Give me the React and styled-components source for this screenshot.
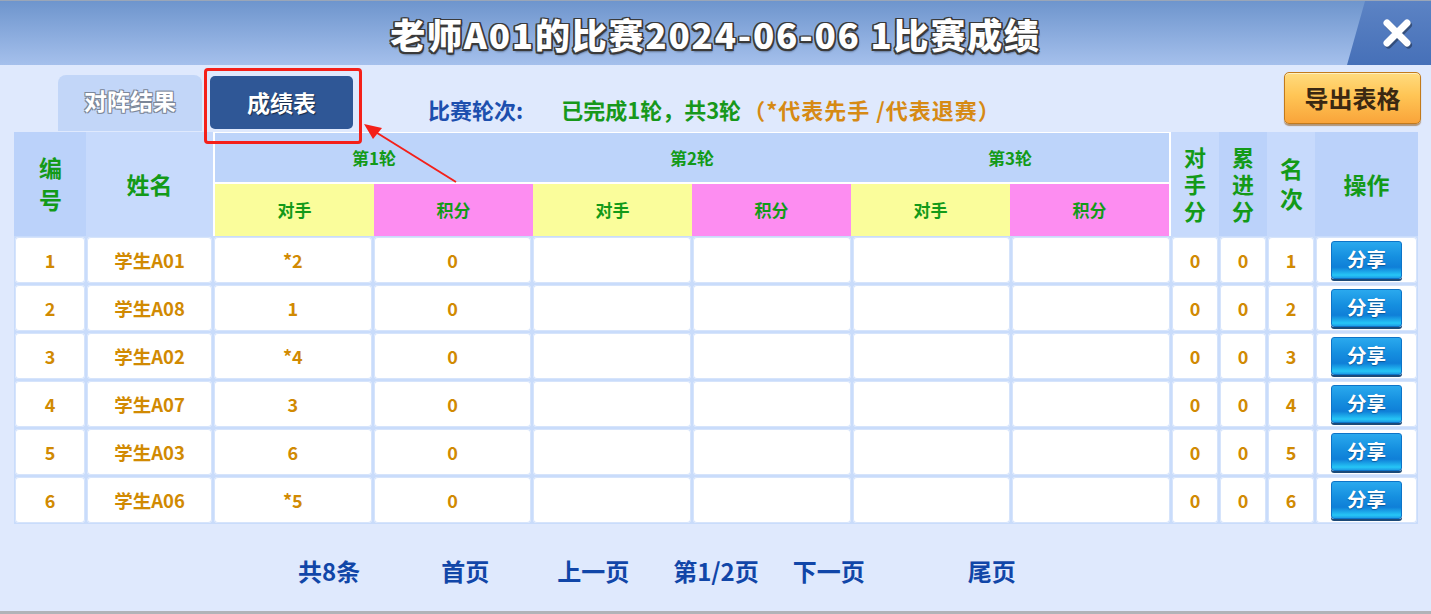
import React from 'react'
import styled, { createGlobalStyle } from 'styled-components'

const GlobalStyle = createGlobalStyle`
  html, body {
    margin: 0;
    padding: 0;
    background: #dfe9fd;
  }
  * { box-sizing: border-box; }
`

const FONT = `"Noto Sans CJK SC", "Noto Sans", sans-serif`
const COLS = '72px 127px repeat(6, 1fr) 48px 48px 48px 103px'

const Page = styled.div`
  position: relative;
  width: 1431px;
  height: 614px;
  overflow: hidden;
  background: #dfe9fd;
  border-top: 1px solid #9aa6b8;
  border-bottom: 3px solid #b0b3b8;
  font-family: ${FONT};
  font-weight: 700;
  display: flex;
  flex-direction: column;
`

const TitleBar = styled.div`
  position: relative;
  height: 64px;
  flex-shrink: 0;
  background: linear-gradient(to bottom, #6e95cd, #a5c0ec);
  display: flex;
  align-items: center;
  justify-content: center;
`

const Title = styled.h1`
  margin: 0;
  padding-top: 1px;
  font-family: ${FONT};
  font-size: 35px;
  font-weight: 900;
  letter-spacing: 1.8px;
  color: #ffffff;
  text-shadow:
    -1.5px -1.5px 0 #3a3a3a, 1.5px -1.5px 0 #3a3a3a,
    -1.5px 1.5px 0 #3a3a3a, 1.5px 1.5px 0 #3a3a3a,
    0 -1.5px 0 #3a3a3a, 0 1.5px 0 #3a3a3a,
    -1.5px 0 0 #3a3a3a, 1.5px 0 0 #3a3a3a,
    1px 3px 2px rgba(0, 0, 0, 0.35);
`

const CloseArea = styled.button`
  position: absolute;
  top: 0;
  right: 0;
  width: 84px;
  height: 64px;
  border: none;
  padding: 0 0 0 16px;
  background: linear-gradient(to bottom, #5c83c4, #4670b8);
  clip-path: polygon(18px 0, 100% 0, 100% 100%, 0 100%);
  display: flex;
  align-items: center;
  justify-content: center;
  cursor: pointer;
`

const TopRow = styled.div`
  position: relative;
  height: 67px;
  flex-shrink: 0;
  display: flex;
  align-items: flex-end;
  padding-left: 58px;
  padding-right: 10px;
`

const Tab = styled.div`
  width: ${p => (p.$active ? '143px' : '144px')};
  height: ${p => (p.$active ? '53px' : '56px')};
  margin-left: ${p => (p.$active ? '8px' : '0')};
  margin-bottom: ${p => (p.$active ? '3px' : '1px')};
  border-radius: ${p => (p.$active ? '5px' : '8px 8px 0 0')};
  background: ${p => (p.$active ? '#2f5796' : '#c2d6f8')};
  color: #ffffff;
  font-size: 23px;
  display: flex;
  align-items: center;
  justify-content: center;
  padding-bottom: ${p => (p.$active ? '2px' : '6px')};
  text-shadow: ${p => (p.$active
    ? '1px 1px 1px rgba(0,0,0,0.5)'
    : '-1px -1px 0 #7c8798, 1px -1px 0 #7c8798, -1px 1px 0 #7c8798, 1px 1px 0 #7c8798')};
`

const Info = styled.div`
  display: flex;
  align-items: center;
  margin-left: 75px;
  margin-bottom: 7px;
  font-size: 22px;
  height: 32px;
`

const InfoLabel = styled.span`
  color: ${p => p.$color};
  margin-left: ${p => p.$gap || 0}px;
  letter-spacing: ${p => p.$ls || 0}px;
`

const ExportButton = styled.button`
  margin-left: auto;
  align-self: flex-start;
  margin-top: 7px;
  width: 137px;
  height: 52px;
  border: 1px solid #c27a1c;
  border-radius: 5px;
  background: linear-gradient(to bottom, #ffdb7e 0%, #ffc555 45%, #f9a43a 100%);
  box-shadow: inset 0 1px 0 #fff1c0, 0 2px 1px rgba(140, 80, 10, 0.55);
  font-family: ${FONT};
  font-weight: 700;
  font-size: 24px;
  color: #3a2812;
  padding: 0 0 2px;
  cursor: pointer;
`

const Highlight = styled.div`
  position: absolute;
  left: 204px;
  top: 3px;
  width: 158px;
  height: 76px;
  border: 3px solid #f42019;
  border-radius: 4px;
  pointer-events: none;
`

const Arrow = styled.svg`
  position: absolute;
  left: 360px;
  top: 118px;
  pointer-events: none;
`

const Table = styled.div`
  margin: 0 13px 0 14px;
`

const HeadGrid = styled.div`
  display: grid;
  grid-template-columns: ${COLS};
  grid-template-rows: 104px;
  height: 104px;
`

const HeadCell = styled.div`
  background: ${p => (p.$dark ? '#bbd2fa' : '#c7dafc')};
  color: #139a18;
  font-size: ${p => p.$size || 23}px;
  display: flex;
  align-items: center;
  justify-content: center;
  text-align: center;
`

// 세로 글자 (编号, 对手分 ...)
const VerticalText = styled.span`
  writing-mode: vertical-rl;
  text-orientation: upright;
  line-height: 1;
  letter-spacing: ${p => p.$ls}px;
  padding-top: ${p => p.$ls + (p.$top || 0)}px;
`

const RoundBlock = styled.div`
  grid-column: 3 / 9;
  display: grid;
  grid-template-columns: repeat(6, 1fr);
  grid-template-rows: 49px 52px;
  background: #ffffff;
  border-top: 1px solid #ffffff;
  border-left: 2px solid #ffffff;
  border-right: 2px solid #ffffff;
  row-gap: 2px;
`

const RoundTitle = styled.div`
  grid-column: span 2;
  background: #bdd4fa;
  color: #139a18;
  font-size: 17px;
  display: flex;
  align-items: center;
  justify-content: center;
`

const SubHead = styled.div`
  background: ${p => (p.$kind === 'score' ? '#fd8df1' : '#fafd9b')};
  color: #139a18;
  font-size: 17px;
  display: flex;
  align-items: center;
  justify-content: center;
  padding-bottom: 2px;
`

const BodyGrid = styled.div`
  display: grid;
  grid-template-columns: ${COLS};
  grid-auto-rows: 48px;
  background: #c9dcfb;
`

const BodyCell = styled.div`
  margin: 1px;
  background: #ffffff;
  border-radius: 4px;
  box-shadow: inset 0 0 0 1px #d6e4fb;
  color: #d18a02;
  font-size: ${p => (p.$name ? 18.5 : 18)}px;
  display: flex;
  align-items: center;
  justify-content: center;
  padding-bottom: 1px;
`

const ShareButton = styled.button`
  width: 71px;
  height: 38px;
  border: 1px solid #0d74c8;
  border-radius: 3px;
  background: linear-gradient(to bottom, #2aa9ee 0%, #1690e0 40%, #0f7fd8 70%, #26c6f6 92%, #1d9ee6 100%);
  box-shadow: 0 2px 0 #1c4a78;
  font-family: ${FONT};
  font-weight: 700;
  font-size: 19.5px;
  color: #ffffff;
  text-shadow: 0 1px 1px rgba(0, 40, 90, 0.5);
  padding: 0 0 2px;
  cursor: pointer;
`

const Pager = styled.div`
  flex: 1;
  display: flex;
  align-items: center;
  padding-left: 298px;
  padding-top: 6px;
`

const PageLink = styled.span`
  margin-left: ${p => p.$gap}px;
  color: #1146a8;
  font-size: 24px;
  cursor: pointer;
`

const rows = [
  [1, '学生A01', '*2', '0'],
  [2, '学生A08', '1', '0'],
  [3, '学生A02', '*4', '0'],
  [4, '学生A07', '3', '0'],
  [5, '学生A03', '6', '0'],
  [6, '学生A06', '*5', '0'],
]

const pages = [
  ['共8条', 0],
  ['首页', 81],
  ['上一页', 68],
  ['第1/2页', 44],
  ['下一页', 34],
  ['尾页', 103],
]

const App = () => {
  return (
    <Page>
      <GlobalStyle />
      <TitleBar>
        <Title>老师A01的比赛2024-06-06 1比赛成绩</Title>
        <CloseArea aria-label="关闭">
          <svg width="36" height="36" viewBox="0 0 36 36">
            <path d="M8 8 L28 28 M28 8 L8 28" stroke="rgba(0,0,0,0.35)" strokeWidth="7" strokeLinecap="round" transform="translate(1.5 2)" />
            <path d="M8 8 L28 28 M28 8 L8 28" stroke="#ffffff" strokeWidth="7" strokeLinecap="round" />
          </svg>
        </CloseArea>
      </TitleBar>

      <TopRow>
        <Tab>对阵结果</Tab>
        <Tab $active>成绩表</Tab>
        <Info>
          <InfoLabel $color="#1c4fae">比赛轮次:</InfoLabel>
          <InfoLabel $color="#17981a" $gap={38}>已完成1轮，共3轮</InfoLabel>
          <InfoLabel $color="#d68a14" $gap={2} $ls={1}>（*代表先手 /代表退赛）</InfoLabel>
        </Info>
        <ExportButton>导出表格</ExportButton>
        <Highlight />
      </TopRow>

      <Table>
        <HeadGrid>
          <HeadCell $dark><VerticalText $ls={9}>编号</VerticalText></HeadCell>
          <HeadCell>姓名</HeadCell>
          <RoundBlock>
            <RoundTitle>第1轮</RoundTitle>
            <RoundTitle>第2轮</RoundTitle>
            <RoundTitle>第3轮</RoundTitle>
            {[0, 1, 2].map(i => (
              <React.Fragment key={i}>
                <SubHead>对手</SubHead>
                <SubHead $kind="score">积分</SubHead>
              </React.Fragment>
            ))}
          </RoundBlock>
          <HeadCell $size={22}><VerticalText $ls={5} $top={2}>对手分</VerticalText></HeadCell>
          <HeadCell $dark $size={22}><VerticalText $ls={5} $top={2}>累进分</VerticalText></HeadCell>
          <HeadCell><VerticalText $ls={7}>名次</VerticalText></HeadCell>
          <HeadCell $dark>操作</HeadCell>
        </HeadGrid>

        <BodyGrid>
          {rows.map(([id, name, opp, score]) => (
            <React.Fragment key={id}>
              <BodyCell>{id}</BodyCell>
              <BodyCell $name>{name}</BodyCell>
              <BodyCell>{opp}</BodyCell>
              <BodyCell>{score}</BodyCell>
              <BodyCell />
              <BodyCell />
              <BodyCell />
              <BodyCell />
              <BodyCell>0</BodyCell>
              <BodyCell>0</BodyCell>
              <BodyCell>{id}</BodyCell>
              <BodyCell>
                <ShareButton>分享</ShareButton>
              </BodyCell>
            </React.Fragment>
          ))}
        </BodyGrid>
      </Table>

      <Pager>
        {pages.map(([label, gap]) => (
          <PageLink key={label} $gap={gap}>{label}</PageLink>
        ))}
      </Pager>

      <Arrow width="100" height="66" viewBox="0 0 100 66">
        <line x1="96" y1="63" x2="14" y2="12" stroke="#f42019" strokeWidth="2" />
        <path d="M4 5 L22 9 L13 20 Z" fill="#f42019" />
      </Arrow>
    </Page>
  )
}

export default App
